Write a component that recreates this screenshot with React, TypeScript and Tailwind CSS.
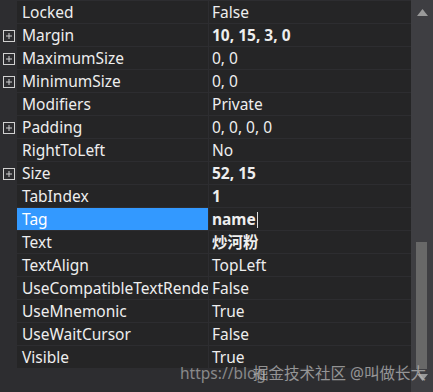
import React from "react";

type Row = { name: string; value: string; plus?: boolean; bold?: boolean; selected?: boolean };

const rows: Row[] = [
  { name: "Locked", value: "False" },
  { name: "Margin", value: "10, 15, 3, 0", plus: true, bold: true },
  { name: "MaximumSize", value: "0, 0", plus: true },
  { name: "MinimumSize", value: "0, 0", plus: true },
  { name: "Modifiers", value: "Private" },
  { name: "Padding", value: "0, 0, 0, 0", plus: true },
  { name: "RightToLeft", value: "No" },
  { name: "Size", value: "52, 15", plus: true, bold: true },
  { name: "TabIndex", value: "1", bold: true },
  { name: "Tag", value: "name", bold: true, selected: true },
  { name: "Text", value: "炒河粉", bold: true },
  { name: "TextAlign", value: "TopLeft" },
  { name: "UseCompatibleTextRendering", value: "False" },
  { name: "UseMnemonic", value: "True" },
  { name: "UseWaitCursor", value: "False" },
  { name: "Visible", value: "True" },
];

function PlusBox() {
  return (
    <svg width="12" height="12" viewBox="0 0 12 12" className="block">
      <rect x="0.5" y="0.5" width="11" height="11" fill="none" stroke="#d0d0d0" strokeWidth="1" />
      <line x1="3" y1="6" x2="9" y2="6" stroke="#d0d0d0" strokeWidth="1" />
      <line x1="6" y1="3" x2="6" y2="9" stroke="#d0d0d0" strokeWidth="1" />
    </svg>
  );
}

export default function App() {
  return (
    <div
      className="relative w-[433px] h-[392px] overflow-hidden bg-[#252526] flex text-[15.5px] text-[#eeeeee]"
      style={{ fontFamily: '"Noto Sans", "Noto Sans CJK SC", sans-serif' }}
    >
      <div className="flex-1 flex flex-col">
        <div className="h-px bg-[#2d2d30]" />
        {rows.map((r) => (
          <div key={r.name} className="flex h-[23px] shrink-0">
            <div className="w-[17px] shrink-0 bg-[#2d2d30] flex items-center justify-center pl-px">
              {r.plus && <PlusBox />}
            </div>
            <div
              className={
                "w-[191px] shrink-0 border-b border-[#2d2d30] pl-[5px] pt-px overflow-hidden whitespace-nowrap leading-[21px] " +
                (r.selected ? "bg-[#3399ff] text-white" : "")
              }
            >
              {r.name}
            </div>
            <div className="w-px shrink-0 bg-[#2d2d30]" />
            <div
              className={
                "flex-1 border-b border-[#2d2d30] pl-[3px] pt-px overflow-hidden whitespace-nowrap leading-[21px] " +
                (r.bold ? "font-bold" : "")
              }
            >
              {r.value}
              {r.selected && <span className="inline-block w-px h-[16px] bg-[#e0e0e0] ml-px align-[-3px]" />}
            </div>
          </div>
        ))}
        <div className="flex-1 bg-[#2d2d30]" />
      </div>
      <div className="w-[22px] shrink-0 bg-[#3e3e42] flex flex-col items-center">
        <svg width="11" height="7" viewBox="0 0 11 7" className="mt-[9px]">
          <polygon points="5.5,0 11,7 0,7" fill="#9a9a9a" />
        </svg>
        <div className="flex-1" />
        <div className="w-[11px] h-[127px] bg-[#686868] -ml-[1px]" />
        <svg width="11" height="7" viewBox="0 0 11 7" className="mt-[5px] mb-[11px]">
          <polygon points="0,0 11,0 5.5,7" fill="#9a9a9a" />
        </svg>
      </div>
      <div className="absolute left-[180px] top-[362px] text-[15.5px] text-[#a0a0a0] opacity-80 whitespace-nowrap pointer-events-none">
        https://blog
      </div>
      <div className="absolute left-[253px] top-[362px] text-[15.5px] text-[#b8b8b8] opacity-75 whitespace-nowrap pointer-events-none">
        掘金技术社区 @叫做长大
      </div>
    </div>
  );
}
